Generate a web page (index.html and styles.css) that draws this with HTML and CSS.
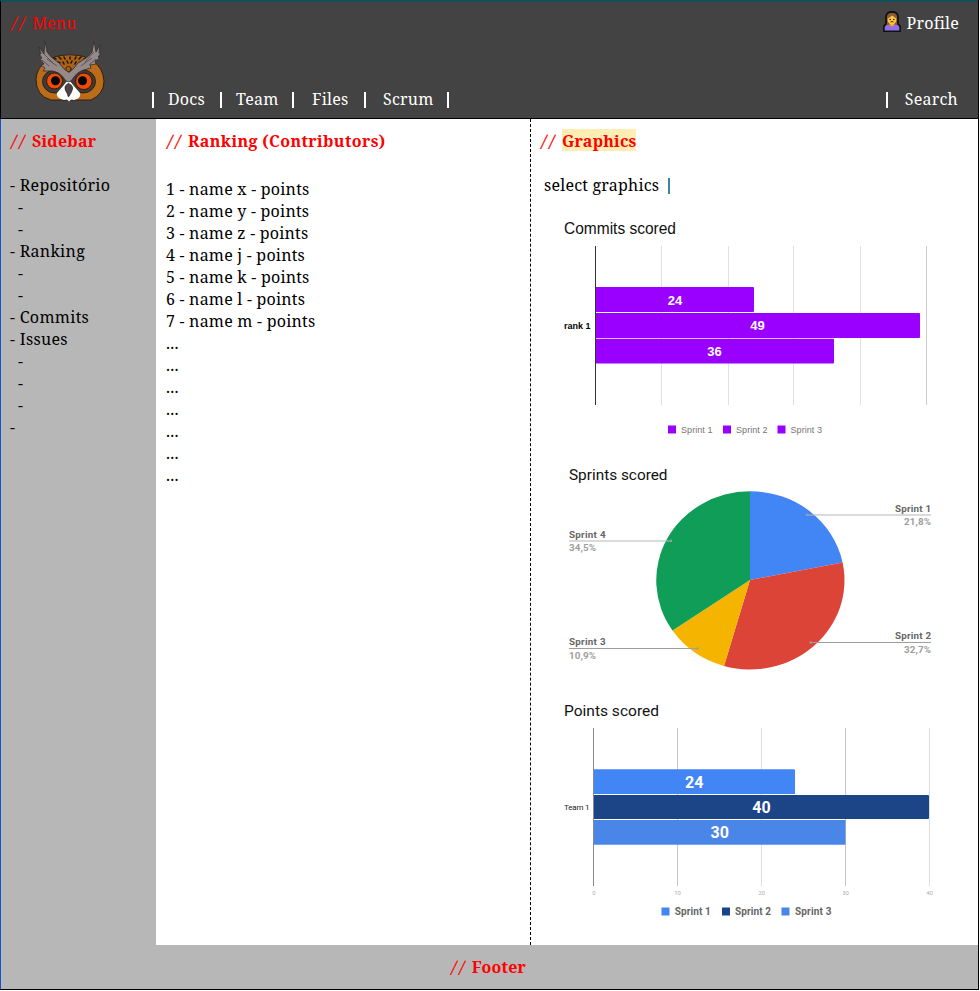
FILE: index.html
```html
<!DOCTYPE html>
<html lang="pt">
<head>
<meta charset="utf-8">
<title>Ranking</title>
<link rel="stylesheet" href="styles.css">
</head>
<body>
<div class="page">
  <header class="header">
    <div class="header-top">
      <span class="note"><span class="slashes">//</span>Menu</span>
      <a class="profile">
        <svg class="avatar" viewBox="0 0 18 21" width="18" height="21">
          <path d="M1 20V15L3 13V5Q4 1 9 .8Q14 1 15 5V13L17 15V20Z" fill="#8a5a34" stroke="#111" stroke-width="1.8"/>
          <path d="M1.8 19.4V16Q3 14 6 13.5L9 16L12 13.5Q16 14 16.3 16.5V19.4Z" fill="#9170f0"/>
          <path d="M6.7 12H11.3V14L9 16L6.7 14Z" fill="#f3ac27"/>
          <ellipse cx="9" cy="8.5" rx="4.4" ry="4.8" fill="#ffc83d"/>
          <path d="M4.3 8Q5 3.5 9 3Q13 3.5 13.7 8Q11 6 9.2 4.6Q7 6.4 4.3 8Z" fill="#8a5a34"/>
          <circle cx="7.2" cy="8.5" r=".8" fill="#222"/><circle cx="10.8" cy="8.5" r=".8" fill="#222"/>
          <path d="M7.5 11Q9 10 10.5 11" fill="none" stroke="#222" stroke-width=".9"/>
        </svg>
        <span>Profile</span>
      </a>
    </div>
    <div class="header-main">
      <svg class="owl" viewBox="0 0 90 75" width="90" height="75">
        <path d="M22 27Q12 33 11 45Q11 62 26 66H66Q79 60 79 47Q78 34 68 27Q61 21 45 21Q29 21 22 27Z" fill="#bb6c18" stroke="#321f10" stroke-width="1"/>
        <path d="M27 25Q44 18 63 25L51 37L44 41L36 36Z" fill="#aa6218"/>
        <g stroke="#20140d" stroke-width="1.6" fill="none" stroke-linecap="round">
          <path d="M29 24l2 1M34 23l2 2M39 23l1 2M45 23v2M51 23l-1 2M56 23l-2 2M61 24l-2 1M33 28l2 1M38 28l1 2M42 27l1 2M47 27l-1 2M51 28l-1 2M56 28l-2 1"/>
          <circle cx="43.5" cy="35" r="2.6" stroke-width=".8"/>
        </g>
        <ellipse cx="30" cy="47.500" rx="12.500" ry="11.500" fill="#403b35" stroke="#292119"/>
        <ellipse cx="58" cy="47.500" rx="12.500" ry="11.500" fill="#403b35" stroke="#292119"/>
        <path d="M43.5 45Q40 50 32 59Q31 63 36 65L39 66L42 65.500L44 67.500L46 65.500L49 66L52 65Q56 63 55 59Q47 50 43.5 45Z" fill="#fff"/>
        <path d="M14 13L19 20L20 7L22 18Q25 23 34 29Q39 36 44 38.500Q48 36 53 29Q64 23 67 18L69 7L71 18L75 11L74 19L76 19L73 23L75 24L70 27L71 30L65 31L66 34L62 35Q53 37 49 43Q46 48 43.5 48Q41 48 38 43Q34 38 28 37L18 37L20 34L16 31L19 30L15 25L17 24L14 20L16 20Z" fill="#96898a" stroke="#332d2d" stroke-width=".8"/>
        <path d="M19 20L28 29M22 25L32 32M17 26L24 32M69 18L60 28M67 24L56 32M71 25L64 31" fill="none" stroke="#51484a" stroke-width=".8"/>
        <circle cx="29.500" cy="47" r="8" fill="#ec4b08" stroke="#301810"/>
        <circle cx="58.800" cy="47.3" r="8.300" fill="#ec4b08" stroke="#301810"/>
        <circle cx="30.5" cy="46.7" r="4.5" fill="#050505"/>
        <circle cx="57.5" cy="46.7" r="4.5" fill="#050505"/>
        <path d="M43.5 49.5Q48 51 47.5 55Q47 58 43.8 62.5Q43 64 42.6 60Q39.5 56 40 53Q41 50 43.5 49.5Z" fill="#4c4447" stroke="#1d191a" stroke-width=".7"/>
      </svg>
      <nav class="nav">
        <i class="bar"></i><a>Docs</a><i class="bar"></i><a>Team</a><i class="bar"></i><a>Files</a><i class="bar"></i><a>Scrum</a><i class="bar"></i>
      </nav>
      <div class="search"><i class="bar"></i><a>Search</a></div>
    </div>
  </header>
  <main class="columns">
    <aside class="sidebar">
      <h2><span class="slashes">//</span><b>Sidebar</b></h2>
      <ul class="tree">
        <li>- Repositório</li><li class="sub">-</li><li class="sub">-</li>
        <li>- Ranking</li><li class="sub">-</li><li class="sub">-</li>
        <li>- Commits</li><li>- Issues</li><li class="sub">-</li><li class="sub">-</li><li class="sub">-</li>
        <li>-</li>
      </ul>
    </aside>
    <section class="ranking">
      <h2><span class="slashes">//</span><b class="wide">Ranking (Contributors)</b></h2>
      <ul class="list">
        <li>1 - name x - points</li><li>2 - name y - points</li><li>3 - name z - points</li><li>4 - name j - points</li><li>5 - name k - points</li><li>6 - name l - points</li><li>7 - name m - points</li>
        <li>...</li><li>...</li><li>...</li><li>...</li><li>...</li><li>...</li><li>...</li>
      </ul>
    </section>
    <section class="graphics">
      <h2><span class="slashes">//</span><b class="mark">Graphics</b></h2>
      <div class="select"><span>select graphics</span><i class="caret"></i></div>
      <svg class="chart" viewBox="550 210 400 240" width="400" height="240">
        <text class="arial title" x="564" y="234" textLength="112" lengthAdjust="spacingAndGlyphs">Commits scored</text>
        <path d="M661.5 246V405M728.5 246V405M793.5 246V405M860.5 246V405" stroke="#e0e0e0"/>
        <path d="M926.5 246V405" stroke="#ccc"/>
        <g fill="#9900ff"><path d="M595 287H753q1 0 1 1V311q0 1-1 1H595ZM595 313H919q1 0 1 1V337q0 1-1 1H595ZM595 338.7H833q1 0 1 1V362.500q0 1-1 1H595Z"/>
        <rect x="668" y="425.500" width="8" height="8"/><rect x="723" y="425.500" width="8" height="8"/><rect x="777.500" y="425.500" width="8" height="8"/></g>
        <path d="M595.500 246V405" stroke="#333"/>
        <g class="arial value"><text x="675" y="304.500">24</text><text x="757.500" y="330">49</text><text x="714.500" y="356">36</text></g>
        <text class="arial rank" x="564" y="328.500" textLength="26.500">rank 1</text>
        <g class="arial legend"><text x="681" y="433" textLength="31.500">Sprint 1</text><text x="736" y="433" textLength="31.500">Sprint 2</text><text x="790.500" y="433" textLength="31.500">Sprint 3</text></g>
      </svg>
      <svg class="chart" viewBox="550 450 400 240" width="400" height="240">
        <text class="roboto title" x="569" y="480.300" textLength="98.500" lengthAdjust="spacingAndGlyphs">Sprints scored</text>
        <path d="M750 580V491.200A94.200 89.200 0 0 1 842.600 562.500Z" fill="#4285f4"/>
        <path d="M750 580L842.600 562.500A94.200 89.200 0 0 1 724 665.900Z" fill="#db4437"/>
        <path d="M750 580L724 665.900A94.200 89.200 0 0 1 672.500 630.500Z" fill="#f4b400"/>
        <path d="M750 580L672.500 630.500A94.200 89.200 0 0 1 750 491.200Z" fill="#0f9d58"/>
        <g stroke="#9e9e9e" fill="none"><path d="M807 515H931" stroke="#b5b5b5"/><path d="M811 642.500H931"/><path d="M569 541H671" stroke="#b5b5b5"/><path d="M569 648.500H698"/></g>
        <g fill="#9e9e9e"><circle cx="806.700" cy="514.800" r="1.200"/><circle cx="810.700" cy="642.500" r="1.200"/><circle cx="671" cy="540.800" r="1.200"/><circle cx="697.500" cy="648.500" r="1.200"/></g>
        <g class="roboto callout">
          <text x="895" y="511.500" textLength="36">Sprint 1</text><text class="pct" x="904" y="525" textLength="27">21,8%</text>
          <text x="895" y="639.300" textLength="36">Sprint 2</text><text class="pct" x="904" y="652.800" textLength="27">32,7%</text>
          <text x="569" y="537.700" textLength="36.500">Sprint 4</text><text class="pct" x="569" y="551.300" textLength="27">34,5%</text>
          <text x="569" y="645.300" textLength="36.500">Sprint 3</text><text class="pct" x="569" y="659" textLength="27">10,9%</text>
        </g>
      </svg>
      <svg class="chart" viewBox="550 690 400 240" width="400" height="240">
        <text class="roboto title" x="564" y="716" textLength="95" lengthAdjust="spacingAndGlyphs">Points scored</text>
        <path d="M677.500 728V886M845.500 728V886" stroke="#c6c6c6"/>
        <path d="M761.500 728V886M929.500 728V886" stroke="#dedede"/>
        <path d="M593.500 728V886" stroke="#888"/>
        <path d="M594 769.200H794q1 0 1 1V794H594Z" fill="#4285f4"/>
        <path d="M594 795H928q1 0 1 1V818q0 1-1 1H594Z" fill="#1c4587"/>
        <path d="M594 820H845.500V843.700q0 1-1 1H594Z" fill="#4a86e8"/>
        <g class="roboto value big"><text x="694.300" y="787.500">24</text><text x="761.500" y="812.800">40</text><text x="719.700" y="838">30</text></g>
        <text class="roboto team-label" x="564" y="809.800" textLength="25.500">Team 1</text>
        <g class="roboto axis"><text x="594" y="895">0</text><text x="677.500" y="895">10</text><text x="761.500" y="895">20</text><text x="845.500" y="895">30</text><text x="929.500" y="895">40</text></g>
        <rect x="661.500" y="907.500" width="8" height="8" fill="#4285f4"/><rect x="722" y="907.500" width="8" height="8" fill="#1c4587"/><rect x="781.500" y="907.500" width="8" height="8" fill="#4a86e8"/>
        <g class="roboto key"><text x="674.800" y="915.200" textLength="36">Sprint 1</text><text x="735" y="915.200" textLength="36">Sprint 2</text><text x="795" y="915.200" textLength="36.500">Sprint 3</text></g>
      </svg>
    </section>
  </main>
  <footer class="footer"><h2><span class="slashes">//</span><b>Footer</b></h2></footer>
</div>
</body>
</html>
```
FILE: styles.css
```css
* { box-sizing: border-box; }
body { margin: 0; background: #fff; color: #000; font: 16px/22px "Noto Serif", "Droid Serif", Cambria, "DejaVu Serif Condensed", serif; letter-spacing: .22px; }
h2, ul { margin: 0; padding: 0; font: inherit; list-style: none; }
.page { width: 979px; height: 990px; display: flex; flex-direction: column; border-right: 1px solid #000; border-bottom: 1px solid #000; }
.header { height: 119px; flex: none; background: #434343; color: #fff; border-top: 2px solid #134f5c; border-left: 1px solid #000; border-bottom: 1px solid #000; padding: 10px 19px 0 9px; }
.header-top { display: flex; justify-content: space-between; height: 22px; }
.note, h2 { color: #f00; display: flex; }
.note { letter-spacing: 0; }
.slashes { width: 22px; padding-left: 2px; letter-spacing: 3.3px; transform: skewX(-13deg); -webkit-text-stroke: .35px #f00; }
.profile { display: flex; gap: 6px; letter-spacing: .2px; }
.avatar { margin-top: -1px; }
.header-main { display: flex; height: 75px; margin-top: 1px; }
.owl { flex: none; margin: -1px 0 0 15px; }
.nav, .search { display: flex; align-items: center; height: 22px; margin-top: 53px; }
.nav { display: grid; grid-template-columns: 16px 52px 16px 56px 20px 52px 19px 64px 2px; margin-left: 37px; }
.bar { width: 1.5px; height: 16px; background: #fff; margin-top: 2px; }
.search { margin: 53px 1px 0 auto; gap: 17px; }
.columns { display: flex; height: 826px; flex: none; }
.sidebar { width: 156px; padding: 11px 9px; background: #b7b7b7; border-left: 1px solid #1155cc; }
.tree { margin-top: 22px; letter-spacing: .3px; }
.sub { padding-left: 8px; }
.ranking { width: 374px; padding: 11px 10px; }
.wide { letter-spacing: .38px; }
.list { margin-top: 26px; }
.graphics { flex: 1; padding: 11px 0 0 9px; border-left: 1px dashed #000; }
.mark { background: #ffeeb3; height: 22px; margin-top: -1px; padding-top: 1px; }
.select { display: flex; align-items: center; gap: 9px; margin: 22px 0 14px 4px; }
.caret { width: 1.5px; height: 16px; background: #3d85a8; margin-top: 2px; }
.chart { display: block; margin-left: 10px; letter-spacing: 0; }
.footer { height: 44px; flex: none; background: #b7b7b7; border-left: 1px solid #1155cc; padding: 11px 3px 0 0; }
.footer h2 { justify-content: center; }
.arial { font-family: "Liberation Sans", Arial, sans-serif; }
.roboto { font-family: Roboto, sans-serif; }
.title { font-size: 15.7px; fill: #111; }
.roboto.title { font-size: 15.3px; }
.value { font-size: 13px; font-weight: 700; fill: #fff; text-anchor: middle; }
.big { font-size: 16px; }
.rank { font-size: 9px; font-weight: 700; }
.legend { font-size: 9px; fill: #757575; }
.callout { font-size: 9.8px; font-weight: 700; fill: #666; }
.pct { fill: #9e9e9e; }
.team-label { font-size: 8px; fill: #222; }
.axis { font-size: 6px; fill: #b0b0b0; text-anchor: middle; }
.key { font-size: 10px; font-weight: 700; fill: #666; }
```
